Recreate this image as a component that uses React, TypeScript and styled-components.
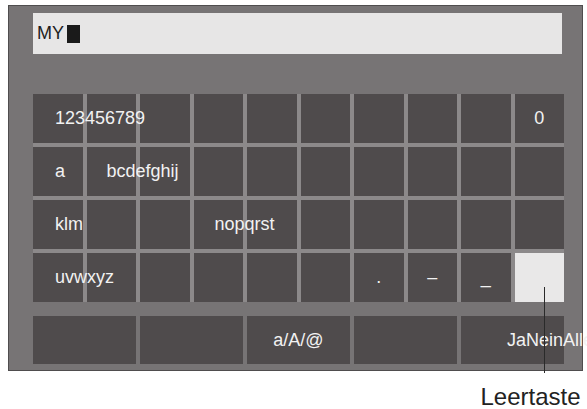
import React from "react";
import styled, { createGlobalStyle } from "styled-components";

const GlobalStyle = createGlobalStyle`
  html, body {
    margin: 0;
    padding: 0;
    background: #ffffff;
    overflow: hidden;
    font-family: "Liberation Sans", Arial, sans-serif;
  }
`;

const Page = styled.div`
  width: 587px;
  height: 409px;
  padding: 5px 0 0 8px;
  box-sizing: border-box;
`;

const Panel = styled.div`
  width: 575px;
  height: 366px;
  box-sizing: border-box;
  padding: 7px 18px 6px 24px;
  background: #777475;
  border: 1px solid #4f4d4e;
  display: flex;
  flex-flow: column;
`;

const InputField = styled.div`
  width: 529px;
  height: 41px;
  box-sizing: border-box;
  padding-left: 4px;
  display: flex;
  align-items: center;
  background: #e7e6e6;
  color: #1e1e1e;
  font-size: 18px;
`;

const Cursor = styled.span`
  width: 13px;
  height: 18px;
  margin-left: 3px;
  background: #1a1a1a;
`;

const KeyGrid = styled.div`
  margin-top: 40px;
  width: 531px;
  display: grid;
  grid-template-columns: repeat(10, minmax(0, 1fr));
  grid-template-rows: repeat(4, 49px);
  gap: 4px;
  background: #8c898a;
`;

const ActionRow = styled.div`
  margin-top: 14px;
  width: 531px;
  display: grid;
  grid-template-columns: repeat(10, minmax(0, 1fr));
  grid-template-rows: 48px;
  gap: 4px;
`;

const Key = styled.div<{ $span?: number; $align?: "left" | "center"; $pad?: number; $light?: boolean }>`
  position: relative;
  min-width: 0;
  grid-column: span ${(p) => p.$span ?? 1};
  display: flex;
  align-items: center;
  justify-content: ${(p) => (p.$align === "center" ? "center" : "flex-start")};
  padding-left: ${(p) => (p.$align === "center" ? 0 : p.$pad ?? 22)}px;
  background: ${(p) => (p.$light ? "#e9e8e8" : "#4f4b4c")};
  color: #f2f2f2;
  font-size: 18px;
  white-space: nowrap;
`;

const Label = styled.span`
  position: relative;
  z-index: 1;
`;

const CalloutLine = styled.span`
  position: absolute;
  left: 29px;
  top: 34px;
  width: 1px;
  height: 86px;
  background: #2a2a2a;
  z-index: 2;
`;

const CalloutText = styled.span`
  position: absolute;
  left: -34px;
  top: 130px;
  color: #222222;
  font-size: 24px;
  z-index: 2;
`;

type KeyDef = { label?: string; align?: "left" | "center"; pad?: number; light?: boolean; callout?: string };

const rows: KeyDef[][] = [
  [{ label: "123456789" }, {}, {}, {}, {}, {}, {}, {}, {}, { label: "0", align: "center" }],
  [{ label: "a" }, { label: "bcdefghij", pad: 20 }, {}, {}, {}, {}, {}, {}, {}, {}],
  [{ label: "klm" }, {}, {}, { label: "nopqrst", pad: 21 }, {}, {}, {}, {}, {}, {}],
  [
    { label: "uvwxyz" },
    {},
    {},
    {},
    {},
    {},
    { label: ".", align: "center" },
    { label: "–", align: "center" },
    { label: "_", align: "center" },
    { light: true, callout: "Leertaste" },
  ],
];

const actions: KeyDef[] = [
  {},
  {},
  { label: "a/A/@", align: "center" },
  {},
  { label: "JaNeinAlle", pad: 46 },
];

const App = () => {
  return (
    <Page>
      <GlobalStyle />
      <Panel>
        <InputField>
          MY
          <Cursor />
        </InputField>
        <KeyGrid>
          {rows.map((row, r) =>
            row.map((k, c) => (
              <Key key={`${r}-${c}`} $align={k.align} $pad={k.pad} $light={k.light}>
                {k.label && <Label>{k.label}</Label>}
                {k.callout && (
                  <>
                    <CalloutLine />
                    <CalloutText>{k.callout}</CalloutText>
                  </>
                )}
              </Key>
            ))
          )}
        </KeyGrid>
        <ActionRow>
          {actions.map((k, i) => (
            <Key key={i} $span={2} $align={k.align} $pad={k.pad}>
              {k.label && <Label>{k.label}</Label>}
            </Key>
          ))}
        </ActionRow>
      </Panel>
    </Page>
  );
};

export default App;
